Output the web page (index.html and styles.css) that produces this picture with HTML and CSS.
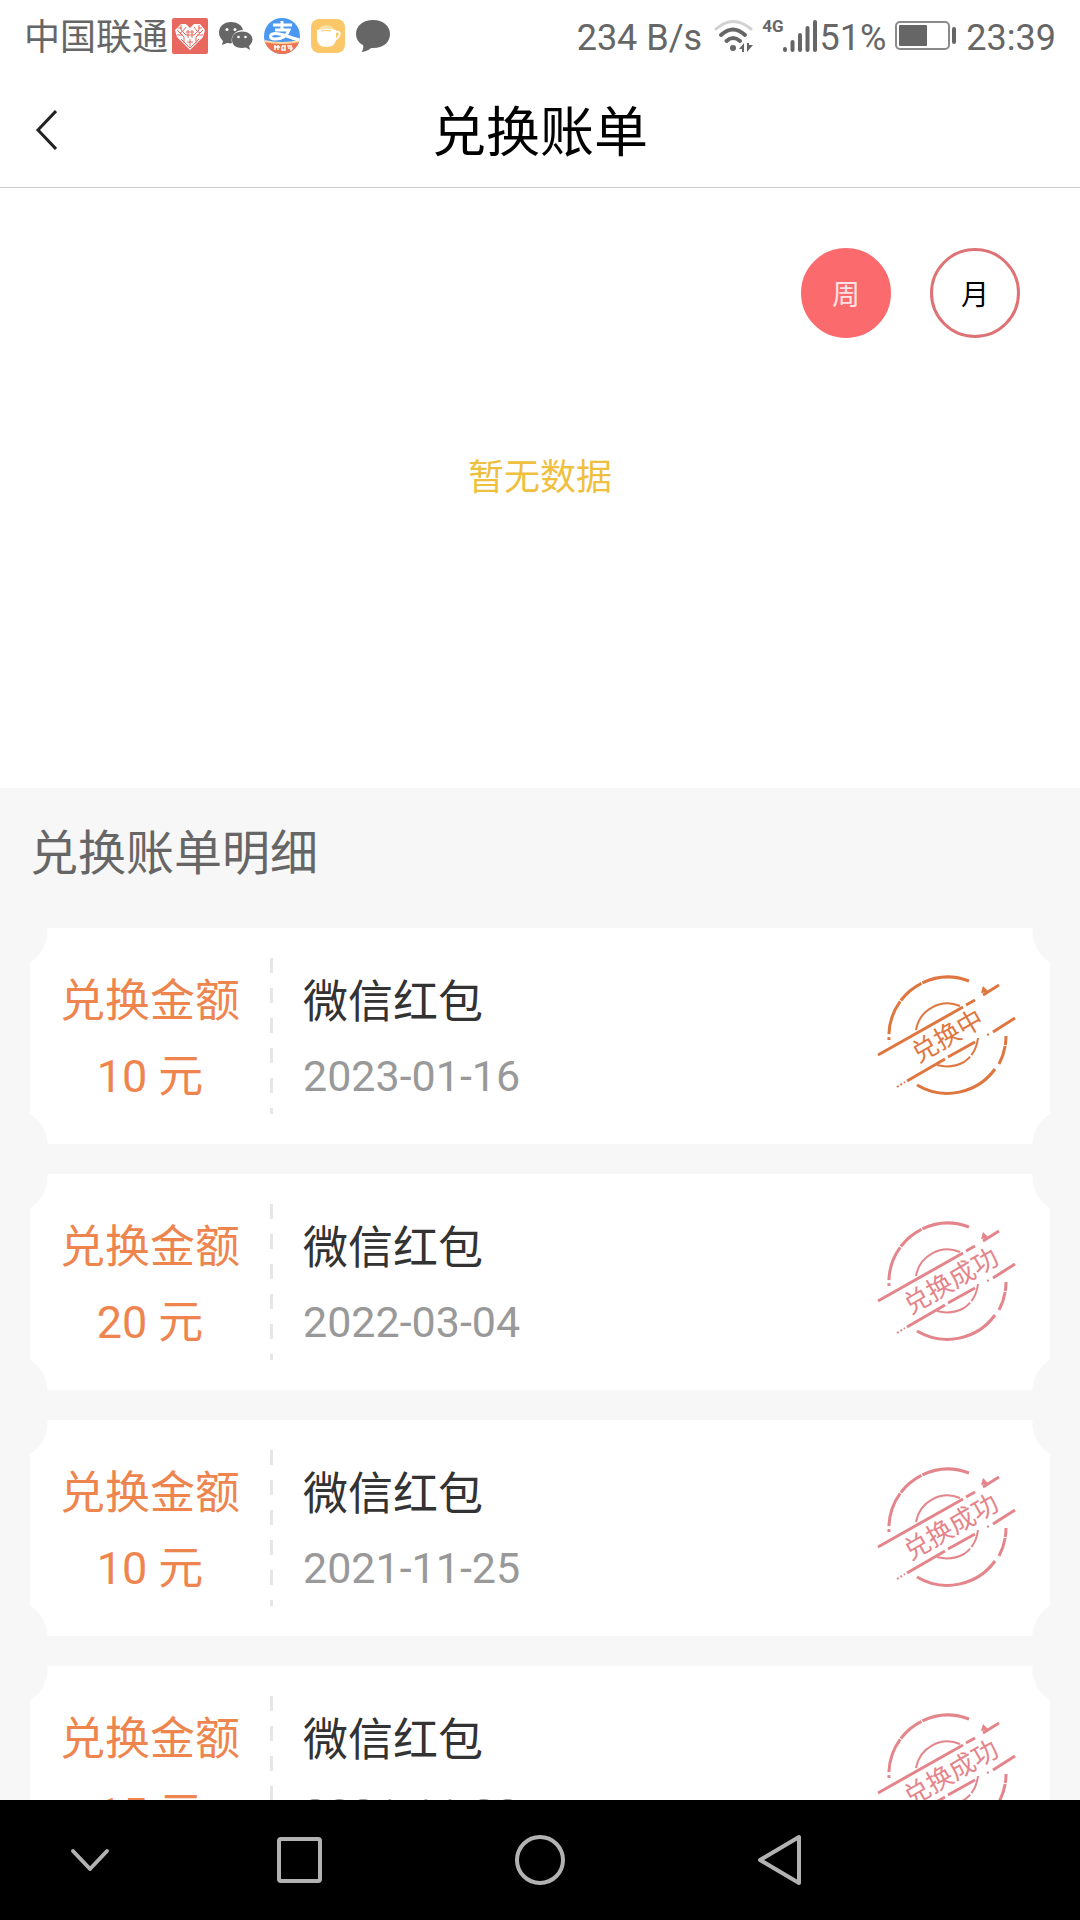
FILE: index.html
```html
<!DOCTYPE html>
<html lang="zh-CN">
<head>
	<meta charset="UTF-8">
	<meta name="viewport" content="width=device-width, initial-scale=1">
	<title>兑换账单</title>

	<link rel="stylesheet" href="styles.css">
</head>
<body>

<!-- symbols shared by the stamps -->
<svg class="symbols" aria-hidden="true">
	<symbol id="stamp-ring" viewBox="0 0 140 124">
		<g fill="none" stroke="currentColor">
			<path stroke-width="3" d="M12 66 A59 59 0 0 1 92 7" stroke-dasharray="3 3 35 1 27 1 60"/>
			<path stroke-width="3" d="M40 111 A59 59 0 0 0 118 95"/>
			<path stroke-width="3" d="M122 90 A59 59 0 0 0 129 61" stroke-dasharray="19 1 9"/>
			<path stroke-width="2" d="M39 56 A32 32 0 0 1 83 32"/>
			<path stroke-width="2" d="M60 91 Q74 95 87 88 Q99 80 101 64" stroke-dasharray="36 2 30"/>
			<path stroke-width="3" d="M1 81 L86 33 M89 31 L98 26 M106 21 L122 11"/>
			<path stroke-width="3" d="M30 107 L68 85 M71 83 L98 68 M116 58 L138 44"/>
			<path stroke-width="2" d="M20 113 L28 108 M110 61 L112 60" stroke-dasharray="2 2"/>
		</g>
		<path fill="currentColor" d="M106 12 L112 18 L104 19 Z"/>
	</symbol>
</svg>

<header class="status-bar">
	<div class="status-left">
		<span class="carrier">中国联通</span>
		<svg class="icon-heart" width="36" height="36" viewBox="0 0 36 36">
			<rect width="36" height="36" rx="2" fill="#e8675f"/>
			<path d="M18 32 L5 19 L3 12 L9 6 L14 6 L18 10 L22 6 L28 6 L33 12 L31 19 Z" fill="#fff"/>
			<g fill="none" stroke="#e8675f" stroke-width="1">
				<path d="M5 12 L12 19 L12 25 M9 7 V12 L14 17 M5 17 H11 M31 12 L24 19 V25 M27 7 V12 L22 17 M31 17 H25 M9 21 L18 30 L27 21 M15 24 H21 M18 21 V28 M14 9 L11 13 M22 9 L25 13 M6 10 H10 M26 10 H30 M8 15 L11 13 M28 15 L25 13"/>
				<path d="M14 14 H22 M14 17 H22 M16 12 V20 M20 12 V20"/>
			</g>
		</svg>
		<svg width="34" height="30" viewBox="0 0 34 30">
			<path fill="#666" d="M12 1 C5 1 0 5 0 12 C0 15 2 18 4 20 L3 24 L8 22 C9 22 11 23 13 22 C11 15 17 9 24 9 C23 4 18 1 12 1 Z"/>
			<path fill="#666" d="M23 10.500 C17 10.500 13 14 13 19 C13 24 17 27 23 27 L27 26.500 L31 29 L30 25 C32 23 33.500 21 33.500 18.500 C33.500 14 29 10.500 23 10.500 Z"/>
			<g fill="#fff"><circle cx="8" cy="8.500" r="1.500"/><circle cx="16" cy="8.500" r="1.500"/><circle cx="19.500" cy="16" r="1.300"/><circle cx="26.500" cy="16" r="1.300"/></g>
		</svg>
		<svg width="36" height="36" viewBox="0 0 36 36">
			<defs><clipPath id="pay-round"><circle cx="18" cy="18" r="18"/></clipPath></defs>
			<g clip-path="url(#pay-round)">
				<rect width="36" height="36" fill="#4b98f1"/>
				<path d="M0 23 Q18 27 36 23 V36 H0 Z" fill="#f0744f"/>
				<path d="M0 23 Q18 27 36 23" fill="none" stroke="#ffd9a0" stroke-width="2"/>
				<g fill="none" stroke="#fff" stroke-width="3">
					<path d="M9 7 H28 M18 3 V12 M11 12 H25 C23 18 18 21 11 21 C5 21 5 16 11 15.500 C18 15 25 20 36 22"/>
					<path stroke-width="1.500" d="M10 29 H16 M11 27 V32 M14 27 V32 M18 28 V32 H21 V28 H18 M23 28 H28 M24 30 H28 Q28 32 26 32"/>
				</g>
			</g>
		</svg>
		<svg width="34" height="34" viewBox="0 0 34 34">
			<rect width="34" height="34" rx="8" fill="#fcc768"/>
			<path d="M7 12 Q9 6 15 6 Q22 6 24 12 Z" fill="#fde0a6"/>
			<path d="M6 11 Q15 9 25 11 V19 Q25 28 15.500 28 Q6 28 6 19 Z" fill="#fff"/>
			<path d="M24 13 Q30 12 28.500 16 Q27 20 23 21" fill="none" stroke="#fff" stroke-width="2"/>
			<path d="M10 12 Q15 11 20 12" fill="none" stroke="#fcc768" stroke-width="1"/>
		</svg>
		<svg width="34" height="32" viewBox="0 0 34 32">
			<path fill="#666" d="M17 0 C7 0 0 6 0 14 C0 19 3 23 7 25 Q8 29 5.500 32 Q12 31 15 28 C26 29 34 23 34 14 C34 6 27 0 17 0 Z"/>
		</svg>
	</div>
	<div class="status-right">
		<span>234 B/s</span>
		<svg class="icon-wifi" width="40" height="34" viewBox="0 0 40 34">
			<g fill="none" stroke="#666" stroke-width="4" stroke-linecap="round">
				<path stroke="#d2d2d2" stroke-width="3" d="M2 10 Q19 -5 37 10"/>
				<path d="M7 16 Q19 5 31 16"/>
				<path d="M12.500 22 Q19 16 26 22"/>
			</g>
			<circle cx="19" cy="29" r="3" fill="#666"/>
			<path fill="#666" d="M30 24 V33 H28 V30 H25 Z M33 33 V24 H35 V26 H39 Z"/>
		</svg>
		<span class="network">4G</span>
		<svg class="icon-signal" width="36" height="34" viewBox="0 0 36 34">
			<g stroke="#666" stroke-width="4" stroke-linecap="round">
				<path d="M3 30 V31 M10.500 23 V31 M18 16 V31 M25.500 9 V31 M33 3 V31"/>
			</g>
		</svg>
		<span>51%</span>
		<svg class="icon-battery" width="62" height="30" viewBox="0 0 62 30">
			<rect x="1" y="1" width="53" height="27" rx="4" fill="none" stroke="#8a8a8a" stroke-width="2"/>
			<rect x="4" y="4" width="28" height="21" rx="1" fill="#666"/>
			<rect x="57" y="6" width="4" height="17" rx="2" fill="#666"/>
		</svg>
		<span>23:39</span>
	</div>
</header>

<nav class="title-bar">
	<a class="back" href="#" aria-label="返回">
		<svg width="22" height="40" viewBox="0 0 22 40"><path d="M21 1 L3 20 L21 39" fill="none" stroke="#222" stroke-width="3"/></svg>
	</a>
	<h1>兑换账单</h1>
</nav>

<main>
	<section class="summary">
		<div class="period">
			<button type="button" class="active">周</button>
			<button type="button">月</button>
		</div>
		<p class="empty">暂无数据</p>
	</section>

	<section class="details">
		<h2>兑换账单明细</h2>
		<ul>
			<li class="ticket">
				<div class="amount"><p>兑换金额</p><p>10 元</p></div>
				<div class="info"><h3>微信红包</h3><time>2023-01-16</time></div>
				<svg class="stamp pending" width="140" height="124" viewBox="0 0 140 124">
					<use href="#stamp-ring"/>
					<text x="70" y="71" transform="rotate(-30 70 61)">兑换中</text>
				</svg>
			</li>
			<li class="ticket">
				<div class="amount"><p>兑换金额</p><p>20 元</p></div>
				<div class="info"><h3>微信红包</h3><time>2022-03-04</time></div>
				<svg class="stamp done" width="140" height="124" viewBox="0 0 140 124">
					<use href="#stamp-ring"/>
					<text x="74" y="70" transform="rotate(-30 74 61)">兑换成功</text>
				</svg>
			</li>
			<li class="ticket">
				<div class="amount"><p>兑换金额</p><p>10 元</p></div>
				<div class="info"><h3>微信红包</h3><time>2021-11-25</time></div>
				<svg class="stamp done" width="140" height="124" viewBox="0 0 140 124">
					<use href="#stamp-ring"/>
					<text x="74" y="70" transform="rotate(-30 74 61)">兑换成功</text>
				</svg>
			</li>
			<li class="ticket">
				<div class="amount"><p>兑换金额</p><p>15 元</p></div>
				<div class="info"><h3>微信红包</h3><time>2021-11-23</time></div>
				<svg class="stamp done" width="140" height="124" viewBox="0 0 140 124">
					<use href="#stamp-ring"/>
					<text x="74" y="70" transform="rotate(-30 74 61)">兑换成功</text>
				</svg>
			</li>
		</ul>
	</section>
</main>

<footer class="nav-bar">
	<button type="button" aria-label="收起">
		<svg width="52" height="52" viewBox="0 0 52 52"><path d="M9 17 L26 35 L43 17"/></svg>
	</button>
	<button type="button" aria-label="最近任务">
		<svg width="52" height="52" viewBox="0 0 52 52"><rect x="5" y="5" width="41" height="42" rx="2"/></svg>
	</button>
	<button type="button" aria-label="主屏幕">
		<svg width="52" height="52" viewBox="0 0 52 52"><circle cx="26" cy="26" r="23"/></svg>
	</button>
	<button type="button" aria-label="返回">
		<svg width="52" height="52" viewBox="0 0 52 52"><path d="M45 3 V49 L6 26 Z"/></svg>
	</button>
</footer>

</body>
</html>
```

FILE: styles.css
```css
*{
    margin: 0;
    padding: 0;
    box-sizing: border-box;
}

body{
    display: flex;
    flex-direction: column;
    height: 100vh;
    background: #fff;
    font-family: Roboto, "Noto Sans CJK SC", sans-serif;
}

h1, h2, h3{
    font-weight: normal;
}

ul{
    list-style: none;
}

button{
    border: none;
    background: none;
    font: inherit;
}

svg{
    display: block;
    flex: none;
}

.symbols{
    position: absolute;
    width: 0;
    height: 0;
}

/* status bar */
.status-bar{
    display: flex;
    justify-content: space-between;
    align-items: center;
    height: 72px;
    padding: 0 24px;
    color: #666;
    font-size: 36px;
    line-height: 40px;
}

.status-bar span{
    padding-top: 4px;
}

.status-left, .status-right{
    display: flex;
    align-items: center;
}

.status-left{
    gap: 11px;
}

.icon-heart{
    margin-left: -7px;
}

.icon-wifi{
    margin: 0 8px 0 12px;
}

.status-bar .network{
    align-self: flex-start;
    padding: 0;
    font-size: 17px;
    font-weight: bold;
    line-height: 24px;
}

.icon-signal{
    margin-right: 2px;
    margin-left: -2px;
}

.icon-battery{
    margin: 0 9px;
}

/* title bar */
.title-bar{
    display: grid;
    grid-template-columns: 90px 1fr 90px;
    align-items: center;
    height: 116px;
    border-bottom: 1px solid #ccc;
}

.back{
    padding-left: 35px;
}

.title-bar h1{
    padding-top: 8px;
    color: #000;
    font-size: 54px;
    line-height: 72px;
    text-align: center;
}

main{
    flex: 1;
    min-height: 0;
    overflow: hidden;
}

/* week / month */
.summary{
    height: 600px;
    padding: 60px;
}

.period{
    display: flex;
    justify-content: flex-end;
    gap: 39px;
}

.period button{
    width: 90px;
    height: 90px;
    border: 3px solid #de7376;
    border-radius: 50%;
    color: #000;
    font-size: 28px;
}

.period .active{
    border-color: #fb6a6d;
    background: #fb6a6d;
    color: #fde3e4;
}

.empty{
    margin-top: 114px;
    color: #efbf40;
    font-size: 36px;
    line-height: 52px;
    text-align: center;
}

/* list */
.details{
    padding: 30px;
    background: #f7f7f7;
}

.details h2{
    margin-bottom: 38px;
    color: #666;
    font-size: 48px;
    line-height: 72px;
}

.ticket{
    display: flex;
    align-items: center;
    height: 216px;
    margin-bottom: 30px;
    padding: 30px 33px 30px 0;
    background:
        radial-gradient(circle at -19px 3px, #f7f7f7 36px, transparent 37px),
        radial-gradient(circle at -19px calc(100% + 1px), #f7f7f7 36px, transparent 37px),
        radial-gradient(circle at calc(100% + 19px) 3px, #f7f7f7 36px, transparent 37px),
        radial-gradient(circle at calc(100% + 19px) calc(100% + 1px), #f7f7f7 36px, transparent 37px),
        #fff;
}

.amount{
    width: 243px;
    height: 156px;
    padding: 6px 3px 0 0;
    background: repeating-linear-gradient(#e6e6e6 0 15px, transparent 15px 30px) right / 3px 100% no-repeat;
    color: #ee854e;
    font-size: 45px;
    line-height: 75px;
    text-align: center;
}

.info{
    flex: 1;
    height: 156px;
    padding: 8px 0 0 30px;
}

.info h3{
    color: #333;
    font-size: 45px;
    line-height: 74px;
}

.info time{
    display: block;
    color: #999;
    font-size: 43px;
    line-height: 72px;
}

.stamp text{
    fill: currentColor;
    font-size: 26px;
    text-anchor: middle;
}

.pending{
    color: #df763f;
}

.done{
    color: #e4858b;
}

/* system navigation */
.nav-bar{
    display: grid;
    grid-template-columns: 3fr 4fr 4fr 4fr 3fr;
    align-items: center;
    height: 120px;
    background: #000;
}

.nav-bar button{
    display: flex;
    justify-content: center;
}

.nav-bar svg{
    fill: none;
    stroke: #b2b2b2;
    stroke-width: 4;
    stroke-linecap: round;
    stroke-linejoin: round;
}
```
